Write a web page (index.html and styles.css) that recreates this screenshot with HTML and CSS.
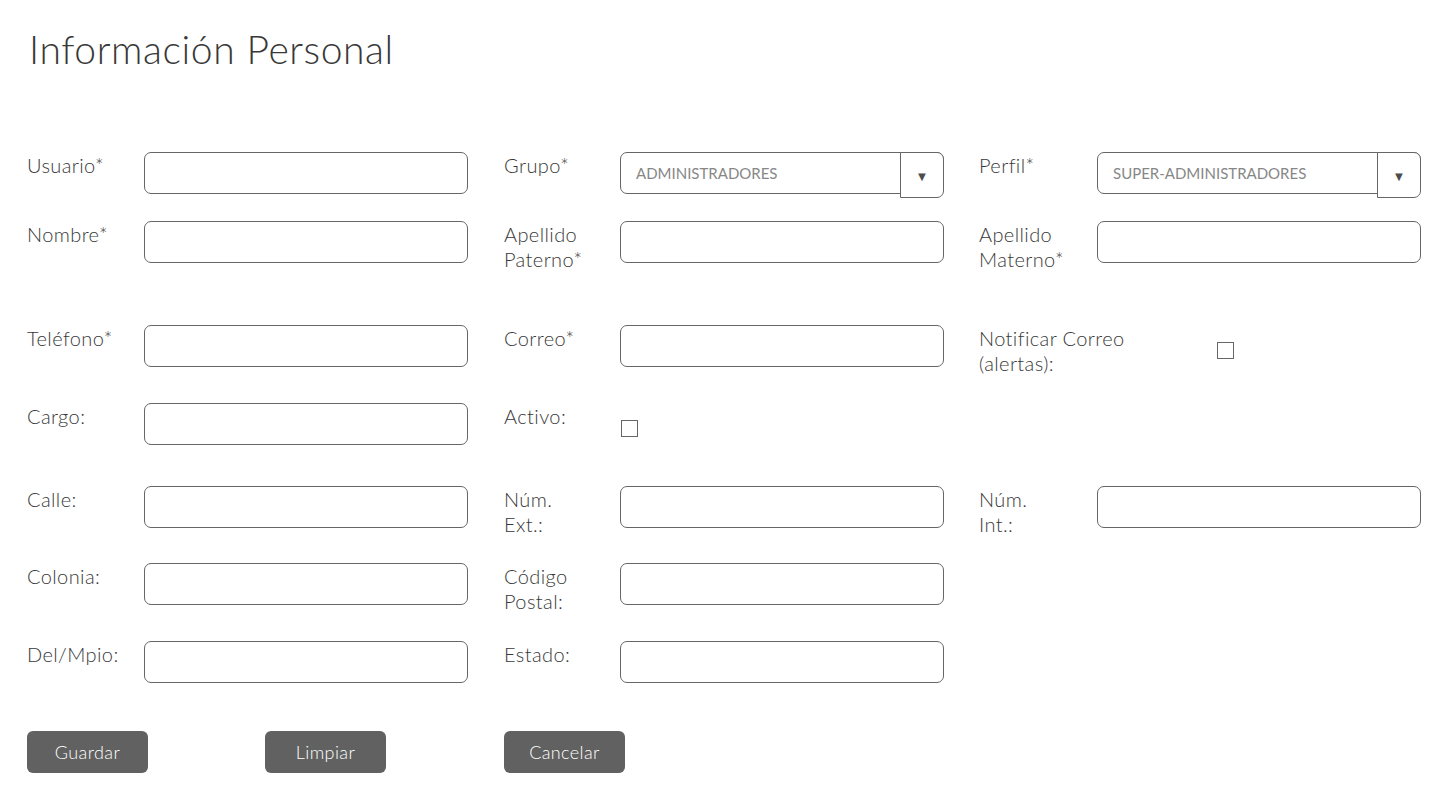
FILE: index.html
```html
<html>
  <head>
    <title>Información Personal</title>
    <link rel="stylesheet" href="styles.css">
  </head>
  <body>
    <main class="page">
      <h1 class="title">Información Personal</h1>
      <form class="form">
        <!-- row 1 -->
        <label class="lbl">Usuario*</label>
        <div class="box"></div>
        <span></span>
        <label class="lbl">Grupo*</label>
        <div class="select">
          <span class="select-text">ADMINISTRADORES</span>
          <span class="select-btn">&#9660;</span>
        </div>
        <span></span>
        <label class="lbl">Perfil*</label>
        <div class="select">
          <span class="select-text">SUPER-ADMINISTRADORES</span>
          <span class="select-btn">&#9660;</span>
        </div>

        <!-- row 2 -->
        <label class="lbl">Nombre*</label>
        <div class="box"></div>
        <span></span>
        <label class="lbl">Apellido<br>Paterno*</label>
        <div class="box"></div>
        <span></span>
        <label class="lbl">Apellido<br>Materno*</label>
        <div class="box"></div>

        <!-- row 3 -->
        <label class="lbl">Teléfono*</label>
        <div class="box"></div>
        <span></span>
        <label class="lbl">Correo*</label>
        <div class="box"></div>
        <span></span>
        <label class="lbl">Notificar Correo<br>(alertas):</label>
        <div class="check-cell notify"><span class="check"></span></div>

        <!-- row 4 -->
        <label class="lbl">Cargo:</label>
        <div class="box"></div>
        <span></span>
        <label class="lbl">Activo:</label>
        <div class="check-cell active"><span class="check"></span></div>
        <span></span>
        <span></span>
        <span></span>

        <!-- row 5 -->
        <label class="lbl">Calle:</label>
        <div class="box"></div>
        <span></span>
        <label class="lbl">Núm.<br>Ext.:</label>
        <div class="box"></div>
        <span></span>
        <label class="lbl">Núm.<br>Int.:</label>
        <div class="box"></div>

        <!-- row 6 -->
        <label class="lbl">Colonia:</label>
        <div class="box"></div>
        <span></span>
        <label class="lbl">Código<br>Postal:</label>
        <div class="box"></div>
        <span></span>
        <span></span>
        <span></span>

        <!-- row 7 -->
        <label class="lbl">Del/Mpio:</label>
        <div class="box"></div>
        <span></span>
        <label class="lbl">Estado:</label>
        <div class="box"></div>
        <span></span>
        <span></span>
        <span></span>
      </form>
      <div class="actions">
        <button class="btn">Guardar</button>
        <button class="btn">Limpiar</button>
        <button class="btn">Cancelar</button>
      </div>
    </main>
  </body>
</html>
```

FILE: styles.css
```css
:root {
  --ink: hsl(0, 0%, 22%);
  --line: hsl(0, 0%, 40%);
  --muted: hsl(0, 0%, 53%);
  --button: hsl(0, 0%, 38%);
}

body {
  margin: 0;
  background-color: #fff;
  color: var(--ink);
  font-family: "Lato", "Open Sans", sans-serif;
  font-weight: 300;
}

.page {
  padding: 26px 0 0 27px;
}

.title {
  margin: 0 0 80px 2px;
  font-size: 39px;
  font-weight: 300;
  line-height: 46px;
  letter-spacing: 0.6px;
}

.form {
  display: grid;
  grid-template-columns: 117px 324px 36px 116px 324px 35px 118px 324px;
  grid-template-rows: 69px 104px 78px 83px 77px 78px 42px;
  align-items: start;
}

.lbl {
  font-size: 20px;
  line-height: 25px;
  margin-top: 1px;
  letter-spacing: 0.4px;
  white-space: nowrap;
}

.box {
  height: 40px;
  border: 1px solid var(--line);
  border-radius: 7px;
}

.select {
  position: relative;
  height: 40px;
  border: 1px solid var(--line);
  border-radius: 7px;
  display: flex;
  align-items: center;
}
.select-text {
  padding-left: 15px;
  font-size: 15px;
  font-weight: 400;
  color: var(--muted);
}
.select-btn {
  position: absolute;
  top: -1px;
  right: -1px;
  width: 44px;
  height: 46px;
  border: 1px solid var(--line);
  border-radius: 0 7px 7px 0;
  background-color: #fff;
  display: flex;
  align-items: center;
  justify-content: center;
  font-size: 13px;
  color: hsl(0, 0%, 30%);
  box-sizing: border-box;
  padding-top: 1px;
}

.check-cell {
  display: flex;
}
.check-cell.notify {
  padding: 17px 0 0 120px;
}
.check-cell.active {
  padding: 17px 0 0 1px;
}
.check {
  width: 15px;
  height: 15px;
  border: 1px solid var(--line);
}

.actions {
  display: flex;
  gap: 117px;
  margin-top: 48px;
}
.btn {
  width: 121px;
  height: 42px;
  border: none;
  border-radius: 6px;
  background-color: var(--button);
  color: #fff;
  font-family: inherit;
  font-size: 18px;
  font-weight: 300;
  letter-spacing: 0.4px;
}
.btn:last-child {
  margin-left: 1px;
}
```
